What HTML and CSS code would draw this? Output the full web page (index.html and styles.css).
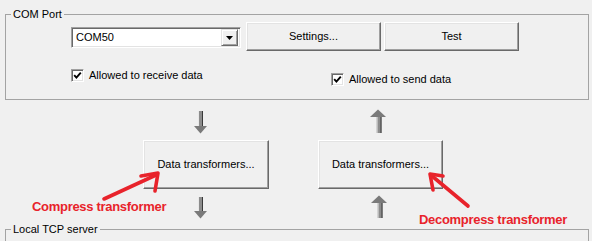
FILE: index.html
```html
<!DOCTYPE html>
<html>
<head>
<meta charset="utf-8">
<link rel="stylesheet" href="styles.css">
</head>
<body>
<div class="window">
  <fieldset class="group com">
    <legend class="group-title">COM Port</legend>
    <div class="port-row">
      <div class="combo">
        <span class="combo-text">COM50</span>
        <span class="combo-btn"><svg width="7" height="4" viewBox="0 0 7 4"><path d="M0 0H7L3.5 4Z" fill="#000"/></svg></span>
      </div>
      <button class="btn btn-wide btn-settings">Settings...</button>
      <button class="btn btn-wide">Test</button>
    </div>
    <div class="check-row">
      <label class="chk chk-recv"><span class="box"><svg width="9" height="9" viewBox="0 0 9 9"><path d="M1.2 4.2 L3.4 6.6 L7.8 1.6" fill="none" stroke="#000" stroke-width="1.9"/></svg></span><span>Allowed to receive data</span></label>
      <label class="chk chk-send"><span class="box"><svg width="9" height="9" viewBox="0 0 9 9"><path d="M1.2 4.2 L3.4 6.6 L7.8 1.6" fill="none" stroke="#000" stroke-width="1.9"/></svg></span><span>Allowed to send data</span></label>
    </div>
  </fieldset>

  <div class="flow">
    <div class="col col-compress">
      <svg class="arrow arrow-down-1" width="14" height="24" viewBox="0 0 14 24">
        <rect x="4" y="1" width="5" height="15" fill="#8c8c8c"/>
        <rect x="4" y="1" width="1" height="15" fill="#e8e8e8"/>
        <rect x="8" y="1" width="1" height="15" fill="#3a3a3a"/>
        <path d="M0 16H13L6.5 23.5Z" fill="#7a7a7a"/>
      </svg>
      <button class="btn btn-transform">Data transformers...</button>
      <svg class="arrow arrow-down-2" width="14" height="22" viewBox="0 0 14 22">
        <rect x="4" y="0" width="5" height="14" fill="#8c8c8c"/>
        <rect x="4" y="0" width="1" height="14" fill="#e8e8e8"/>
        <rect x="8" y="0" width="1" height="14" fill="#3a3a3a"/>
        <path d="M0 14H13L6.5 21.5Z" fill="#7a7a7a"/>
      </svg>
    </div>
    <div class="col col-decompress">
      <svg class="arrow arrow-up-1" width="16" height="24" viewBox="0 0 16 24">
        <path d="M8 0.5L16 8H0Z" fill="#7a7a7a"/>
        <rect x="6.5" y="8" width="5" height="16" fill="#8c8c8c"/>
        <rect x="6.5" y="8" width="1" height="16" fill="#e8e8e8"/>
        <rect x="10.5" y="8" width="1" height="16" fill="#3a3a3a"/>
      </svg>
      <button class="btn btn-transform">Data transformers...</button>
      <svg class="arrow arrow-up-2" width="16" height="23" viewBox="0 0 16 23">
        <path d="M8 0.5L16 8H0Z" fill="#7a7a7a"/>
        <rect x="6.5" y="8" width="5" height="15" fill="#8c8c8c"/>
        <rect x="6.5" y="8" width="1" height="15" fill="#e8e8e8"/>
        <rect x="10.5" y="8" width="1" height="15" fill="#3a3a3a"/>
      </svg>
    </div>
  </div>

  <fieldset class="group tcp">
    <legend class="group-title">Local TCP server</legend>
  </fieldset>

  <div class="notes">
    <span class="note note-compress">Compress transformer</span>
    <span class="note note-decompress">Decompress transformer</span>
    <svg class="note-arrows" width="592" height="241" viewBox="0 0 592 241">
      <g fill="none" stroke="#e8232b" stroke-width="3.6" stroke-linecap="round" stroke-linejoin="round">
        <path d="M104 199 L156 175"/>
        <path d="M141 176 L158 173 L155 191"/>
        <path d="M468 206 L432 176"/>
        <path d="M433 190 L430 174 L443 176"/>
      </g>
    </svg>
  </div>
</div>
</body>
</html>
```

FILE: styles.css
```css
html, body {
  margin: 0;
  padding: 0;
}
body {
  background: #f0f0f0;
  font-family: "Liberation Sans", Arial, sans-serif;
  font-size: 11px;
  color: #000;
  overflow: hidden;
}
.window {
  position: relative;
  width: 592px;
  height: 241px;
  overflow: hidden;
}
.group {
  margin: 8px 0 0 5px;
  width: 584px;
  box-sizing: border-box;
  border: 1px solid #a3a3a3;
  padding: 0;
  min-width: 0;
}
.group-title {
  margin-left: 5px;
  padding: 0 2px;
  line-height: 13px;
  font-size: 11px;
}
.com {
  padding-bottom: 13px;
}
.port-row {
  display: flex;
  align-items: flex-start;
  margin-top: 1px;
}
.combo {
  box-sizing: border-box;
  width: 170px;
  height: 21px;
  margin: 5px 0 0 65px;
  background: #fff;
  border: 1px solid;
  border-color: #a0a0a0 #fff #fff #a0a0a0;
  box-shadow: inset 1px 1px #696969, inset -1px -1px #e3e3e3;
  display: flex;
  align-items: center;
  padding: 2px 2px 2px 4px;
}
.combo-text {
  flex: 1;
  line-height: 13px;
}
.combo-btn {
  box-sizing: border-box;
  width: 17px;
  height: 17px;
  background: #f0f0f0;
  border: 1px solid;
  border-color: #e3e3e3 #696969 #696969 #e3e3e3;
  box-shadow: inset 1px 1px #fff, inset -1px -1px #a0a0a0;
  display: flex;
  align-items: center;
  justify-content: center;
  padding-top: 1px;
}
.btn {
  box-sizing: border-box;
  font-family: "Liberation Sans", Arial, sans-serif;
  font-size: 11px;
  color: #000;
  background: #f0f0f0;
  border: 1px solid;
  border-color: #fff #696969 #696969 #fff;
  box-shadow: inset -1px -1px #a0a0a0, inset 1px 1px #e3e3e3;
  padding: 0;
  margin: 0;
  line-height: 13px;
}
.btn-wide {
  width: 135px;
  height: 29px;
}
.btn-settings {
  margin-left: 5px;
  margin-right: 3px;
}
.check-row {
  display: grid;
  grid-template-columns: 260px auto;
  align-items: start;
  margin: 18px 0 0 65px;
}
.chk {
  display: flex;
  align-items: center;
  gap: 5px;
  line-height: 13px;
  height: 13px;
}
.chk-send {
  margin-top: 4px;
}
.box {
  box-sizing: border-box;
  width: 13px;
  height: 13px;
  background: #fff;
  border: 1px solid;
  border-color: #a0a0a0 #fff #fff #a0a0a0;
  box-shadow: inset 1px 1px #696969, inset -1px -1px #e3e3e3;
  display: flex;
  align-items: center;
  justify-content: center;
}
.box svg {
  display: block;
}
.flow {
  display: flex;
  align-items: flex-start;
}
.col {
  display: flex;
  flex-direction: column;
  align-items: flex-start;
}
.col-compress {
  margin-left: 143px;
}
.col-decompress {
  margin-left: 49px;
}
.arrow {
  display: block;
}
.arrow-down-1 {
  margin: 10px 0 6px 51px;
}
.arrow-down-2 {
  margin: 8px 0 0 51px;
}
.arrow-up-1 {
  margin: 9px 0 7px 52px;
}
.arrow-up-2 {
  margin: 6px 0 0 53px;
}
.btn-transform {
  width: 126px;
  height: 49px;
}
.col-decompress .btn-transform {
  width: 125px;
}
.tcp {
  margin-top: 4px;
  height: 60px;
}
.notes {
  position: absolute;
  left: 0;
  top: 0;
  width: 592px;
  height: 241px;
  pointer-events: none;
}
.note {
  position: absolute;
  font-family: "Liberation Sans", Arial, sans-serif;
  font-weight: bold;
  font-size: 13px;
  line-height: 15px;
  letter-spacing: -0.3px;
  color: #e8232b;
  white-space: nowrap;
}
.note-compress {
  left: 32px;
  top: 199px;
}
.note-decompress {
  left: 419px;
  top: 212px;
}
.note-arrows {
  position: absolute;
  left: 0;
  top: 0;
}
```
